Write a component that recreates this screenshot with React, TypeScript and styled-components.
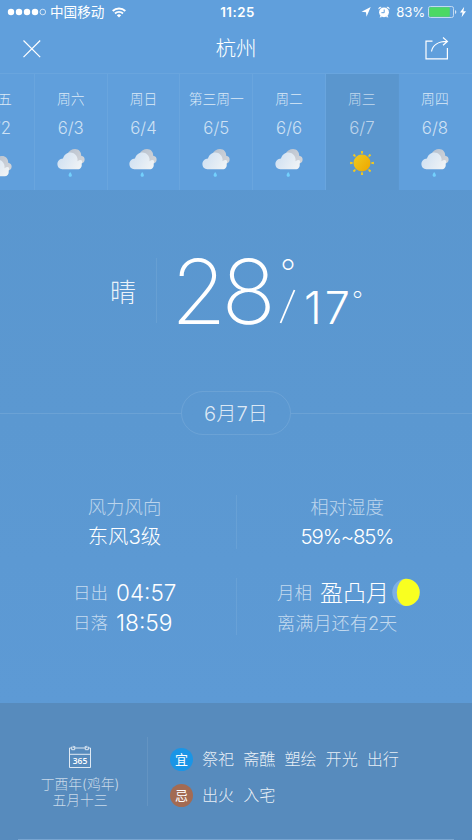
import React from "react";
import styled, { createGlobalStyle } from "styled-components";

const Global = createGlobalStyle`
  * { box-sizing: border-box; }
  body { margin: 0; background: #5b98d1; }
`;

const Screen = styled.main`
  width: 472px;
  height: 840px;
  overflow: hidden;
  display: flex;
  flex-direction: column;
  color: #fff;
  font-family: Inter, "Noto Sans CJK SC", sans-serif;
  font-weight: 300;
  background: linear-gradient(#5a96ce, #5b98d1 50%, #5d9ad5 703px);
`;

const Top = styled.header`
  height: 73px;
  flex: none;
  background: #609fdc;
`;

const StatusBar = styled.div`
  height: 24px;
  display: grid;
  grid-template-columns: 1fr auto 1fr;
  align-items: center;
  padding: 0 5px 0 8px;
`;

const StatusGroup = styled.div<{ $end?: boolean }>`
  display: flex;
  align-items: center;
  justify-content: ${(p) => (p.$end ? "flex-end" : "flex-start")};
`;

const Label = styled.span<{
  $size: number;
  $line?: number;
  $alpha?: number;
  $weight?: number;
  $track?: number;
}>`
  display: block;
  white-space: nowrap;
  font-size: ${(p) => p.$size}px;
  line-height: ${(p) => p.$line ?? 24}px;
  font-weight: ${(p) => p.$weight ?? 300};
  letter-spacing: ${(p) => p.$track ?? 0}px;
  color: rgba(255, 255, 255, ${(p) => p.$alpha ?? 1});
`;

const Icon = styled.svg`
  display: block;
  flex: none;
  overflow: visible;
`;

const Carrier = styled(Label)`
  margin: 0 8px 0 4px;
`;

const Percent = styled(Label)`
  margin: 0 3px 0 7px;
`;

const Nav = styled.nav`
  height: 49px;
  display: grid;
  grid-template-columns: 1fr auto 1fr;
  align-items: center;
  padding: 0 23px;
  & > :last-child { justify-self: end; }
`;

const Strip = styled.div`
  flex: none;
  height: 117px;
  margin-left: -38px;
  display: grid;
  grid-template-columns: repeat(6, 72.8px) 1fr;
  border-top: 1px solid #69a5de;
  background: #609fdc;
`;

const Day = styled.div<{ $active?: boolean }>`
  display: flex;
  flex-direction: column;
  align-items: center;
  padding-top: 13px;
  border-right: 1px solid ${(p) => (p.$active ? "#5b97cf" : "#69a5de")};
  background: ${(p) => (p.$active ? "#5a96ce" : "transparent")};
  &:last-child { border-right: 0; padding-right: 1px; }
`;

const DayIcon = styled.div`
  margin-top: 4px;
  height: 30px;
`;

const Hero = styled.section`
  height: 201px;
  flex: none;
  display: flex;
  align-items: flex-start;
  padding: 68px 0 0 110px;
`;

const Condition = styled(Label)`
  width: 46px;
`;

const Rule = styled.i<{ $h: number }>`
  flex: none;
  width: 1px;
  height: ${(p) => p.$h}px;
  background: rgba(255, 255, 255, 0.08);
`;

const High = styled(Label)`
  width: 101px;
  margin: 1px 0 0 14px;
`;

const HighMark = styled(Label)`
  width: 0;
  margin: 0 0 0 8px;
`;

const Slash = styled.svg`
  flex: none;
  margin: 31px 0 0 -1px;
`;

const Low = styled(Label)`
  width: 48px;
  margin: 33px 0 0 7px;
`;

const LowMark = styled(Label)`
  margin-top: 34px;
`;

const DateRow = styled.div`
  height: 44px;
  flex: none;
  display: grid;
  grid-template-columns: 181px 110px 1fr;
  align-items: center;
`;

const Line = styled.i`
  height: 1px;
  background: rgba(255, 255, 255, 0.1);
`;

const Pill = styled.div`
  height: 44px;
  display: flex;
  align-items: center;
  justify-content: center;
  padding-top: 2px;
  border: 1px solid rgba(255, 255, 255, 0.1);
  border-radius: 22px;
`;

const Details = styled.section`
  flex: 1;
  padding-top: 60px;
`;

const DetailRow = styled.div<{ $gap?: number }>`
  display: grid;
  grid-template-columns: 236px 1px 1fr;
  margin-bottom: ${(p) => p.$gap ?? 0}px;
`;

const Centered = styled.div<{ $inset?: number }>`
  display: flex;
  flex-direction: column;
  align-items: center;
  padding-right: ${(p) => p.$inset ?? 0}px;
`;

const Leading = styled.div<{ $indent: number }>`
  padding-left: ${(p) => p.$indent}px;
`;

const Pair = styled.div`
  display: flex;
  height: 30px;
  align-items: center;
  gap: 8px;
`;

const MoonSlot = styled.div`
  margin-left: -5px;
`;

const Footer = styled.footer`
  height: 137px;
  flex: none;
  display: flex;
  flex-direction: column;
  justify-content: space-between;
  background: #578bbd;
`;

const Almanac = styled.div`
  display: flex;
  padding-top: 34px;
`;

const Lunar = styled.div`
  width: 147px;
  padding: 8px 0 0 13px;
  display: flex;
  flex-direction: column;
  align-items: center;
`;

const LunarText = styled.div`
  margin-top: 7px;
`;

const Advice = styled.div`
  padding: 10px 0 0 22px;
  display: flex;
  flex-direction: column;
  gap: 12px;
`;

const AdviceRow = styled.div`
  display: flex;
  align-items: center;
  gap: 9px;
`;

const Badge = styled.b<{ $color: string }>`
  width: 23px;
  height: 23px;
  border-radius: 50%;
  background: ${(p) => p.$color};
  text-align: center;
  font-size: 13px;
  line-height: 23px;
  font-weight: 400;
`;

const BottomLine = styled.i`
  height: 1px;
  margin: 0 18px;
  background: #77a4d0;
`;

const Cloud = ({ rain = true }: { rain?: boolean }) => (
  <Icon width="28" height="30" viewBox="0 0 28 30">
    <defs>
      <linearGradient id="cloudFront" x1="0" y1="0.3" x2="1" y2="0.7">
        <stop offset="0" stopColor="#cfe0f2" />
        <stop offset="1" stopColor="#f0f3f5" />
      </linearGradient>
      <linearGradient id="cloudBack" x1="0" y1="0" x2="1" y2="0.5">
        <stop offset="0" stopColor="#b6c1cf" />
        <stop offset="1" stopColor="#d0d3d8" />
      </linearGradient>
    </defs>
    <g transform={rain ? undefined : "translate(0 7)"}>
      <path
        d="M10.5 5C12 1.6 15 0 18 0C21.8 0 24.4 2.9 24.2 6.8C26.4 7.1 27.8 8.7 27.6 11C27.4 13.2 25.6 14.6 23.4 14.4L17 15Z"
        fill="url(#cloudBack)"
      />
      <path
        d="M5.4 20.3C2.4 20.3 .4 18 .4 15.1C.4 11.9 2.8 9.6 6 9.5C7 5.7 9.8 3.4 13.3 3.4C17.4 3.4 20.6 6.7 20.6 10.7C20.6 11.2 20.5 11.8 20.4 12.2C22.3 11 24.6 10.6 25 11.9C25.5 13.5 24.5 14 24.7 15.2C25.1 18 23.4 20.3 20.7 20.3Z"
        fill="url(#cloudFront)"
      />
    </g>
    {rain && (
      <path
        d="M13.2 22.9Q10.6 26.3 12.2 27.5Q13.2 28.2 14.4 27.4Q15.8 26.2 13.2 22.9Z"
        fill="#73d0fd"
      />
    )}
  </Icon>
);

const Sun = () => (
  <Icon width="28" height="30" viewBox="0 0 28 30">
    <defs>
      <linearGradient id="sunFace" x1="0" y1="0" x2="1" y2="0.8">
        <stop offset="0" stopColor="#eecb20" />
        <stop offset="1" stopColor="#efa900" />
      </linearGradient>
    </defs>
    <circle cx="14" cy="14" r="8.5" fill="url(#sunFace)" />
    {[0, 45, 90, 135, 180, 225, 270, 315].map((a) => (
      <path
        key={a}
        d="M12.8 2.3Q14 1.5 15.2 2.3L14.7 4.7H13.3Z"
        fill="#f4c91e"
        transform={`rotate(${a} 14 14)`}
      />
    ))}
  </Icon>
);

const Calendar = () => (
  <Icon width="24" height="24" viewBox="0 0 24 24" fill="none" stroke="#dfe9f3" strokeWidth="1">
    <path d="M3.7 3H1.5V22.5H22.5V3H20.3M6.7 3H17.3M1.5 9.3H22.5" />
    <path d="M3.7 1.7V4.7H6.7V1M5.2 0.8V3M17.3 1V4.7H20.3V1.7M18.8 0.8V3" />
    <text
      x="12"
      y="19"
      textAnchor="middle"
      fill="#fff"
      stroke="none"
      fontFamily="Open Sans, sans-serif"
      fontSize="8.5"
      fontWeight="600"
    >
      365
    </text>
  </Icon>
);

const days = [
  { name: "周五", date: "6/2", kind: "cloud" },
  { name: "周六", date: "6/3", kind: "rain" },
  { name: "周日", date: "6/4", kind: "rain" },
  { name: "第三周一", date: "6/5", kind: "rain" },
  { name: "周二", date: "6/6", kind: "rain" },
  { name: "周三", date: "6/7", kind: "sun" },
  { name: "周四", date: "6/8", kind: "rain" },
];

const good = ["祭祀", "斋醮", "塑绘", "开光", "出行"];
const bad = ["出火", "入宅"];

export default function App() {
  return (
    <Screen>
      <Global />
      <Top>
        <StatusBar>
          <StatusGroup>
            <Icon width="38" height="8" viewBox="0 0 38 8" fill="#fff">
              {[3, 11, 19, 27].map((x) => (
                <circle key={x} cx={x} cy="4" r="3.2" />
              ))}
              <circle cx="34.8" cy="4" r="2.8" fill="none" stroke="#fff" strokeWidth=".7" />
            </Icon>
            <Carrier $size={13.6} $weight={400}>中国移动</Carrier>
            <Icon width="14" height="11" viewBox="0 0 14 11" fill="none" stroke="#fff" strokeWidth="1.9">
              <path d="M0.7 4A9 9 0 0 1 13.3 4M3 6.5A5.8 5.8 0 0 1 11 6.5" />
              <path d="M4.8 8.3A3.3 3.3 0 0 1 9.2 8.3L7 10.6Z" fill="#fff" stroke="none" />
            </Icon>
          </StatusGroup>
          <Label $size={13.3} $weight={600} $track={0.5}>11:25</Label>
          <StatusGroup $end>
            <Icon width="28" height="12" viewBox="0 0 28 12" fill="#fff">
              <path d="M9.7 .9L.5 5.7L5 6.2L5.5 10.8Z" />
              <circle cx="23" cy="6.3" r="4.9" />
              <path d="M17.4 3.6A2.4 2.4 0 0 1 20.7 .9ZM28.6 3.6A2.4 2.4 0 0 0 25.3 .9ZM19.6 9.5L18.6 11.5L21.1 10.9ZM26.4 9.5L27.4 11.5L24.9 10.9Z" />
              <path d="M23.2 3.5V6.7H20.4" fill="none" stroke="#609fdc" strokeWidth="1" />
            </Icon>
            <Percent $size={13.2} $weight={400} $track={-0.2}>83%</Percent>
            <Icon width="39" height="12" viewBox="0 0 39 12">
              <rect x=".5" y=".5" width="25" height="11" rx="1.8" fill="none" stroke="#c2daf1" />
              <rect x="1.3" y="1.3" width="20.5" height="9.4" rx=".8" fill="#4bd964" />
              <path d="M27 4V8Q28.3 7.5 28.3 6T27 4Z" fill="#d6e6f6" />
              <path d="M36.2 .7L32 6.6H34.5L33.6 11.2L38 5.2H35.4Z" fill="#fff" />
            </Icon>
          </StatusGroup>
        </StatusBar>
        <Nav>
          <Icon width="18" height="18" viewBox="0 0 18 18" stroke="#fff" strokeWidth="1.2">
            <path d="M.5 .5L17.2 17.2M17.2 .5L.5 17.2" />
          </Icon>
          <Label $size={20.6} $line={26}>杭州</Label>
          <Icon width="24" height="24" viewBox="0 0 24 24" fill="none" stroke="#fff" strokeWidth="1.2">
            <path d="M7.5 4.2H1V21.9H22.4V11" />
            <path d="M6.5 14.5C7.5 8.5 13 4.4 22 4.4M18 .5L22.4 4.4L18 8.3" />
          </Icon>
        </Nav>
      </Top>

      <Strip>
        {days.map((d) => (
          <Day key={d.date} $active={d.kind === "sun"}>
            <Label $size={13.8} $alpha={d.kind === "sun" ? 0.65 : 0.78}>{d.name}</Label>
            <Label $size={16.8} $line={34} $weight={350} $alpha={d.kind === "sun" ? 0.6 : 0.7}>{d.date}</Label>
            <DayIcon>{d.kind === "sun" ? <Sun /> : <Cloud rain={d.kind === "rain"} />}</DayIcon>
          </Day>
        ))}
      </Strip>

      <Hero>
        <Condition $size={26} $line={69} $alpha={0.9}>晴</Condition>
        <Rule $h={65} />
        <High $size={90} $line={66} $weight={160} $track={-5}>28</High>
        <HighMark $size={35} $line={28} $weight={250}>°</HighMark>
        <Slash width="18" height="36" viewBox="0 0 18 36">
          <path d="M1.5 34L15.5 1" stroke="#fff" strokeWidth="1.8" />
        </Slash>
        <Low $size={45} $line={33} $weight={300} $track={3}>17</Low>
        <LowMark $size={24} $line={17} $weight={250}>°</LowMark>
      </Hero>

      <DateRow>
        <Line />
        <Pill>
          <Label $size={20.2} $alpha={0.8}>6月7日</Label>
        </Pill>
        <Line />
      </DateRow>

      <Details>
        <DetailRow $gap={24}>
          <Centered>
            <Leading $indent={13}>
              <Label $size={18.4} $alpha={0.6}>风力风向</Label>
              <Label $size={20.4} $line={35}>东风3级</Label>
            </Leading>
          </Centered>
          <Rule $h={54} />
          <Centered $inset={15}>
            <Label $size={18.4} $alpha={0.6}>相对湿度</Label>
            <Label $size={20.4} $line={35} $weight={350} $track={-1.1}>59%~85%</Label>
          </Centered>
        </DetailRow>
        <DetailRow>
          <Leading $indent={73}>
            <Pair>
              <Label $size={17.5} $alpha={0.65}>日出</Label>
              <Label $size={22.5} $line={22} $weight={350}>04:57</Label>
            </Pair>
            <Pair>
              <Label $size={17.5} $alpha={0.65}>日落</Label>
              <Label $size={22.8} $line={22} $weight={350}>18:59</Label>
            </Pair>
          </Leading>
          <Rule $h={57} />
          <Leading $indent={40}>
            <Pair>
              <Label $size={17.5} $alpha={0.65}>月相</Label>
              <Label $size={23}>盈凸月</Label>
              <MoonSlot>
                <Icon width="28" height="28" viewBox="0 0 28 28">
                  <circle cx="14" cy="13.4" r="13.7" fill="#7db0e5" />
                  <path d="M14 -.3A13.7 13.7 0 0 1 14 27.1A9.2 13.7 0 0 1 14 -.3Z" fill="#f9ff20" />
                </Icon>
              </MoonSlot>
            </Pair>
            <Label $size={18.2} $line={31} $alpha={0.65}>离满月还有2天</Label>
          </Leading>
        </DetailRow>
      </Details>

      <Footer>
        <Almanac>
          <Lunar>
            <Calendar />
            <LunarText>
              <Centered>
                <Label $size={13.8} $line={16} $alpha={0.68}>丁酉年(鸡年)</Label>
                <Label $size={13.8} $line={16} $alpha={0.68}>五月十三</Label>
              </Centered>
            </LunarText>
          </Lunar>
          <Rule $h={69} />
          <Advice>
            <AdviceRow>
              <Badge $color="#1a95e6">宜</Badge>
              {good.map((w) => (
                <Label key={w} $size={16.1} $alpha={0.88}>{w}</Label>
              ))}
            </AdviceRow>
            <AdviceRow>
              <Badge $color="#a36b53">忌</Badge>
              {bad.map((w) => (
                <Label key={w} $size={16.1} $alpha={0.88}>{w}</Label>
              ))}
            </AdviceRow>
          </Advice>
        </Almanac>
        <BottomLine />
      </Footer>
    </Screen>
  );
}
